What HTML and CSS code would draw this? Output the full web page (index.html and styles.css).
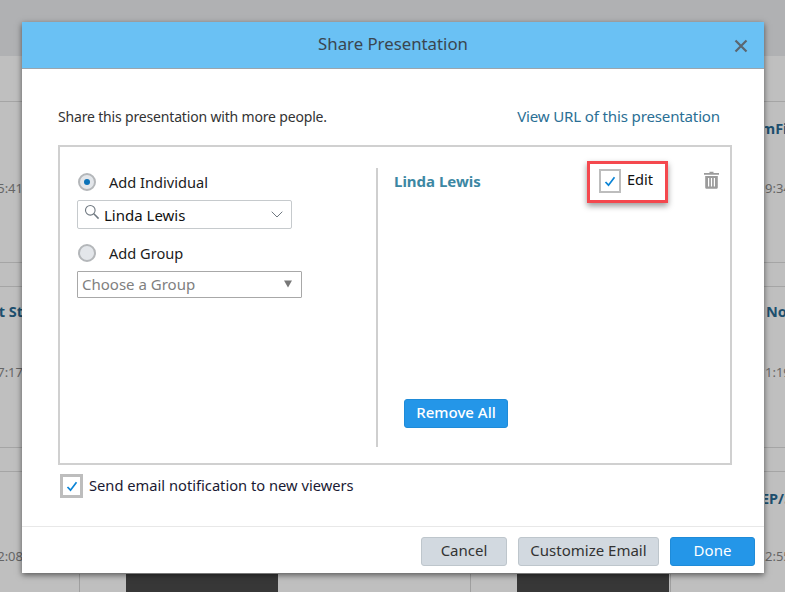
FILE: index.html
```html
<!DOCTYPE html>
<html lang="en">
<head>
<meta charset="utf-8">
<title>Share Presentation</title>
<link rel="stylesheet" href="styles.css">
</head>
<body>
<div class="page">
  <div class="topbar"></div>
  <div class="list">
    <div class="row row-one">
      <div class="cell"><span class="card-title">&nbsp;</span><span class="card-time">15:41</span></div>
      <div class="cell cell-right"><span class="card-title title-clipped">mFile</span><span class="card-time">9:34</span></div>
    </div>
    <div class="row row-two">
      <div class="cell"><span class="card-title">t St</span><span class="card-time">7:17</span></div>
      <div class="cell cell-right"><span class="card-title title-inset">No</span><span class="card-time">1:19</span></div>
    </div>
    <div class="row row-three">
      <div class="cell"><span class="card-title">&nbsp;</span><span class="card-time">2:08</span></div>
      <div class="cell cell-right"><span class="card-title title-clipped">EP/S</span><span class="card-time">2:55</span></div>
    </div>
    <div class="thumbs">
      <div class="thumb-group thumb-left"><div class="thumb"></div></div>
      <div class="thumb-group thumb-right"><div class="thumb"></div></div>
    </div>
  </div>
</div>

<div class="modal">
  <header class="modal-head">
    <h1 class="modal-title">Share Presentation</h1>
    <svg class="close" width="14" height="14" viewBox="0 0 14 14"><path d="M1.500 1.500l11 11M12.500 1.500l-11 11" stroke="#5b6670" stroke-width="2.200" fill="none"/></svg>
  </header>
  <div class="modal-body">
    <div class="intro">
      <span>Share this presentation with more people.</span>
      <a class="url-link">View URL of this presentation</a>
    </div>
    <div class="share-box">
      <div class="pane-left">
        <label class="radio-line"><span class="radio radio-on"></span>Add Individual</label>
        <div class="search-field">
          <svg class="search-icon" width="16" height="16" viewBox="0 0 16 16"><circle cx="6.300" cy="6.300" r="4.800" stroke="#6f7880" stroke-width="1.100" fill="none"/><path d="M9.800 9.800l4.800 4.800" stroke="#6f7880" stroke-width="1.500"/></svg>
          <span class="search-value">Linda Lewis</span>
          <svg class="chevron" width="12" height="7" viewBox="0 0 12 7"><path d="M.7.7L6 6 11.300.7" stroke="#6f7880" stroke-width="1" fill="none"/></svg>
        </div>
        <label class="radio-line radio-group"><span class="radio"></span>Add Group</label>
        <div class="select-field">
          <span class="select-text">Choose a Group</span>
          <svg class="select-arrow" width="8" height="8" viewBox="0 0 8 8"><path d="M0 .5h8L4 7.500z" fill="#777"/></svg>
        </div>
      </div>
      <div class="pane-right">
        <div class="person">
          <span class="person-name">Linda Lewis</span>
          <div class="highlight">
            <span class="check check-small"><svg width="12" height="11" viewBox="0 0 12 11"><path d="M1.500 6l3 3.200 6-8" stroke="#0a84d6" stroke-width="1.700" fill="none"/></svg></span>
            <span class="edit-label">Edit</span>
          </div>
          <svg class="trash" width="15" height="18" viewBox="0 0 15 18"><path d="M5.500 2V.8h4V2H15v1.800H0V2z" fill="#9b9b9b"/><path fill-rule="evenodd" d="M1.200 5h12.600v11.200c0 1-.7 1.600-1.600 1.600H2.800c-.9 0-1.600-.6-1.600-1.600zM4 7v8.500h1.200V7zm2.900 0v8.500h1.200V7zM9.800 7v8.500H11V7z" fill="#9b9b9b"/></svg>
        </div>
        <button class="btn btn-primary btn-remove">Remove All</button>
      </div>
    </div>
    <label class="notify">
      <span class="check check-large"><svg width="12" height="11" viewBox="0 0 12 11"><path d="M1.500 6l3 3.200 6-8" stroke="#0a84d6" stroke-width="1.700" fill="none"/></svg></span>
      <span class="notify-text">Send email notification to new viewers</span>
    </label>
  </div>
  <footer class="modal-foot">
    <button class="btn btn-cancel">Cancel</button>
    <button class="btn btn-custom">Customize Email</button>
    <button class="btn btn-primary btn-done">Done</button>
  </footer>
</div>
</body>
</html>
```

FILE: styles.css
```css
* { box-sizing: border-box; }

html, body {
  margin: 0;
  height: 100%;
  overflow: hidden;
}

body {
  font-family: "Noto Sans", "Open Sans", sans-serif;
  font-size: 14px;
  color: #222;
  background: #bfbfbf;
}

.page {
  width: 785px;
  height: 592px;
  overflow: hidden;
}

.topbar {
  height: 56px;
  background: #b0b1b3;
}

.list {
  padding-top: 45px;
}

.row {
  height: 162px;
  display: flex;
  justify-content: space-between;
  border-top: 1px solid #a5a5a5;
  border-bottom: 1px solid #a5a5a5;
  margin-bottom: 23px;
}

.row-three {
  height: 103px;
  border-bottom: 0;
  margin-bottom: 0;
}

.cell {
  display: flex;
  flex-direction: column;
  width: 23px;
  padding-top: 16px;
  white-space: nowrap;
  overflow: hidden;
}

.row-two .cell { padding-top: 14px; }

.cell span { direction: rtl; }

.cell-right {
  width: 20px;
}

.cell-right span { direction: ltr; }

.card-title {
  height: 61px;
  font-weight: 700;
  color: #1d4f6e;
  font-size: 14.500px;
}

.row-two .card-title { height: 62px; }
.row-three .card-title { height: 59px; }

.title-clipped { text-indent: -4px; }

.title-inset { padding-left: 1px; }

.card-time {
  color: #666;
  font-size: 13px;
}

.thumbs {
  height: 19px;
  position: relative;
}

.thumb-group {
  position: absolute;
  top: 0;
  height: 19px;
}

.thumb-left {
  left: 79px;
  width: 199px;
  border-left: 1px solid #9f9f9f;
  padding-left: 46px;
}

.thumb-right {
  left: 470px;
  width: 201px;
  border-left: 1px solid #9f9f9f;
  border-right: 1px solid #9f9f9f;
  padding-left: 46px;
}

.thumb {
  width: 152px;
  height: 19px;
  background: #373737;
}

.modal {
  position: absolute;
  left: 22px;
  top: 22px;
  width: 742px;
  height: 551px;
  background: #fff;
  display: flex;
  flex-direction: column;
  box-shadow: 0 2px 6px rgba(0, 0, 0, .55);
}

.modal-head {
  height: 47px;
  flex: none;
  background: #6ac1f4;
  border-bottom: 1px solid #9aa5ad;
  display: flex;
  align-items: center;
  justify-content: center;
  position: relative;
}

.modal-title {
  margin: 0 0 4px;
  font-size: 16.800px;
  font-weight: 400;
  color: #3a4650;
}

.close {
  position: absolute;
  right: 16px;
  top: 17px;
}

.modal-body {
  flex: 1;
  padding: 37px 32px 0 36px;
}

.intro {
  display: flex;
  justify-content: space-between;
  align-items: center;
  height: 20px;
  padding-right: 12px;
  letter-spacing: -.17px;
  color: #333;
}

.url-link {
  color: #2b6f95;
  font-size: 15.100px;
}

.share-box {
  margin-top: 19px;
  height: 320px;
  border: 2px solid #d0d0d0;
  display: flex;
  padding: 21px 0 16px;
}

.pane-left {
  width: 318px;
  flex: none;
  padding: 5px 0 0 17px;
  border-right: 2px solid #cfcfcf;
}

.radio-line {
  display: flex;
  align-items: center;
  height: 18px;
  padding-left: 1px;
  color: #1c1c1c;
  font-size: 14.600px;
}

.radio-group {
  margin-top: 15px;
}

.radio {
  width: 18px;
  height: 18px;
  border-radius: 50%;
  border: 2px solid #b4b7ba;
  background: #e3e6ea;
  margin-right: 13px;
  position: relative;
  display: block;
}

.radio-on::after {
  content: "";
  position: absolute;
  left: 4px;
  top: 4px;
  width: 6px;
  height: 6px;
  border-radius: 50%;
  background: #0a72b8;
}

.search-field {
  margin-top: 9px;
  width: 215px;
  height: 29px;
  border: 1px solid #c6cacd;
  border-radius: 2px;
  display: flex;
  align-items: center;
  padding: 0 8px 0 6px;
  font-size: 15px;
  color: #111;
}

.search-icon {
  margin: -5px 4px 0 0;
}

.search-value {
  flex: 1;
}

.select-field {
  margin-top: 9px;
  width: 225px;
  height: 27px;
  border: 1px solid #a8a8a8;
  border-radius: 1px;
  display: flex;
  align-items: center;
  justify-content: space-between;
  padding: 0 9px 1px 4px;
  color: #808080;
  font-size: 15px;
}

.pane-right {
  flex: 1;
  display: flex;
  flex-direction: column;
  padding: 0 12px 0 16px;
}

.person {
  display: flex;
  align-items: flex-start;
}

.person-name {
  width: 193px;
  flex: none;
  margin-top: 3px;
  font-weight: 700;
  color: #3c87a3;
  font-size: 15px;
}

.highlight {
  width: 81px;
  height: 42px;
  margin-top: -7px;
  border: 3px solid #f4484e;
  box-shadow: 0 3px 6px rgba(0, 0, 0, .4);
  background: #fff;
  display: flex;
  align-items: flex-start;
  padding: 5px 0 0 9px;
  color: #111;
}

.edit-label {
  margin: 0 0 0 6px;
  font-size: 14.600px;
}

.check {
  display: flex;
  align-items: center;
  justify-content: center;
  flex: none;
  background: #fff;
  border-style: solid;
  border-color: #bdbdbd;
}

.check-small {
  width: 22px;
  height: 24px;
  border-width: 2px;
}

.check-large {
  width: 23px;
  height: 24px;
  border-width: 3px;
}

.trash {
  margin: 3px 0 0 36px;
}

.btn {
  font-family: inherit;
  font-size: 15px;
  height: 29px;
  padding: 0 0 3px;
  border-radius: 3px;
  cursor: pointer;
}

.btn-primary {
  background: #2496e8;
  border: 1px solid #1f8bd8;
  color: #fff;
}

.btn-remove {
  width: 104px;
  margin-top: auto;
  margin-left: 10px;
  margin-bottom: 19px;
  font-weight: 500;
}

.notify {
  display: flex;
  align-items: center;
  margin: 9px 0 0 2px;
  height: 24px;
  gap: 6px;
  color: #1a1a33;
  font-size: 14.700px;
}

.notify-text {
  margin-top: -2px;
}

.modal-foot {
  flex: none;
  height: 47px;
  border-top: 1px solid #e8e8e8;
  display: flex;
  justify-content: flex-end;
  align-items: flex-start;
  gap: 11px;
  padding: 10px 9px 0 0;
}

.btn-cancel,
.btn-custom {
  background: #d2d9e0;
  border: 1px solid #bec6cc;
  color: #333;
}

.btn-cancel { width: 86px; }
.btn-custom { width: 141px; }
.btn-done { width: 85px; }
```
